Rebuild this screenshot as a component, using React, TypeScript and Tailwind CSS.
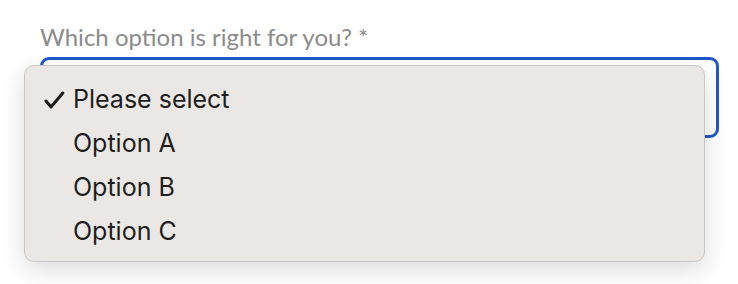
import React from "react";

function Check() {
  return (
    <svg width="22" height="20" viewBox="0 0 22 20" className="shrink-0">
      <path d="M2 11 L7 17 L18.8 3" fill="none" stroke="#1c1c1c" strokeWidth="3" strokeLinecap="round" strokeLinejoin="round" />
    </svg>
  );
}

export default function App() {
  const options = ["Please select", "Option A", "Option B", "Option C"];
  return (
    <div className="w-[738px] h-[284px] bg-white overflow-hidden relative">
      <div className="pl-[40px] pr-[19px] pt-[23px]">
        <div className="text-[24px] leading-[28px] text-[#8b8b8b] font-['Lato','Noto_Sans',sans-serif]">
          Which option is right for you? *
        </div>
        <div className="mt-[6px] h-[81px] rounded-[9px] border-[3px] border-[#2257c6] bg-white" />
      </div>
      <div className="absolute left-[24px] top-[65px] w-[681px] h-[197px] rounded-[10px] bg-[#ebe7e4] border border-[#c9c6c3] shadow-[0_8px_24px_rgba(0,0,0,0.14)] pt-[12px] overflow-hidden font-['Inter','Noto_Sans',sans-serif] text-[25px] text-[#1e1e1e]">
        {options.map((o, i) => (
          <div key={o} className="h-[44px] flex items-center">
            <div className="w-[48px] pl-[19px] flex items-center">{i === 0 ? <Check /> : null}</div>
            <span>{o}</span>
          </div>
        ))}
      </div>
    </div>
  );
}
